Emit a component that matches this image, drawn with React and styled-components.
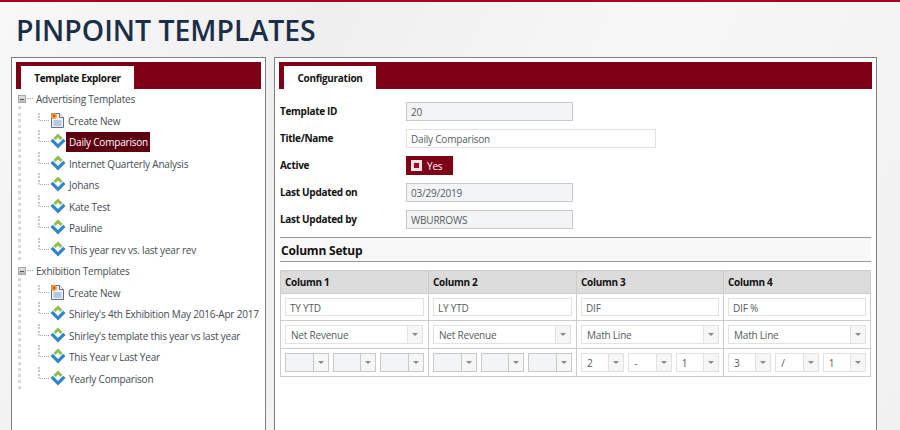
import React from "react";
import styled, { createGlobalStyle } from "styled-components";

const Global = createGlobalStyle`
  html, body { margin: 0; padding: 0; height: 430px; overflow: hidden; }
  body {
    font-family: "Open Sans", "Noto Sans", sans-serif;
    background: linear-gradient(115deg, #f8f8f8 0%, #efefef 30%, #f7f7f7 60%, #f1f1f1 100%);
  }
  * { box-sizing: border-box; }
`;
const uiFont = `font-size: 10px; letter-spacing: -0.2px;`;
const uiBold = `font-size: 10px; font-weight: 700; letter-spacing: -0.3px;`;
const Page = styled.div`
  width: 900px; height: 430px; overflow: hidden;
  border-top: 2px solid #a80026;
  padding: 0 11px;
`;
const Title = styled.h1`
  margin: 0; padding: 0 0 0 5px; height: 55px;
  font-size: 28.4px; line-height: 57px; font-weight: 600; color: #1b2e47;
  white-space: nowrap;
`;
const Panels = styled.div`display: flex; gap: 8px; align-items: flex-start;`;
const Panel = styled.section`
  width: ${p => p.$w}px; height: 400px; flex: none;
  background: #fff; border: 1px solid #7f7f7f;
  padding: 4px 4px 0;
`;
const TabBar = styled.div`
  height: 27px; background: #7e0016; padding: 4px 0 0 5px;
`;
const Tab = styled.div`
  width: ${p => p.$w}px; height: 23px; background: #fff;
  ${uiBold} line-height: 24px; text-align: center; color: #111;
`;
const Tree = styled.div`margin-top: -1px;`;
const RootRow = styled.div`
  height: 21.5px; display: flex; align-items: center; position: relative;
  ${uiFont} color: #444a55; padding-left: 19px; gap: 1px;
`;
const Toggle = styled.span`
  width: 8px; height: 8px; flex: none; margin-left: -17px;
  background: linear-gradient(#e4e4e4, #b8b8b8); border: 1px solid #a8a8a8;
  display: flex; align-items: center; justify-content: center; margin-top: 1px;
  &::after { content: ""; width: 4px; height: 1px; background: #555; }
`;
const RootDash = styled.span`
  width: 6px; height: 0; flex: none; border-top: 1px dotted #aaa; margin-right: 2px;
`;
const Kids = styled.div`
  position: relative; padding-left: 19px;
  &::before {
    content: ""; position: absolute; left: 2px; top: -4px; bottom: 0;
    border-left: 3px dotted #d8d8d8;
  }
`;
const KidRow = styled.div`
  height: 21.5px; display: flex; align-items: center; position: relative;
  ${uiFont} color: #444a55;
`;
const Conn = styled.span`
  position: absolute; left: 3px; top: ${p => p.$first ? 3 : -1}px; width: 11px;
  height: ${p => p.$first ? 8 : 12}px;
  border-left: 2px dotted #c8c8c8; border-bottom: 1px dotted #aaa;
`;
const IconBox = styled.span`
  flex: none; margin-left: 15px; width: 16px; height: 18px; display: flex; margin-top: 1px;
`;
const Label = styled.span`
  padding: 0 2px 0 3px; line-height: 20px; margin-top: 1px; white-space: nowrap;
  ${p => p.$new && "margin-left: -1px;"}
  ${p => p.$sel && "background:#5c0010;color:#fff;"}
`;

const Body = styled.div`padding: 13px 1px 0;`;
const FormRow = styled.div`
  height: 27px; display: flex; ${uiFont}
`;
const FieldLabel = styled.label`
  width: 126px; ${uiBold} color: #111; line-height: 19px; flex: none;
`;
const Field = styled.div`
  width: ${p => p.$w}px; height: 19px; padding: 0 4px;
  border: 1px solid ${p => p.$ro ? "#c8c8c8" : "#e2e2e2"};
  background: ${p => p.$ro ? "#f3f4f6" : "#fff"};
  color: #555b63; line-height: 19px;
`;
const Toggle2 = styled.div`
  width: 47px; height: 19px; background: #7e0016; color: #fff;
  display: flex; align-items: center; padding-left: 5px; gap: 5px;
`;
const Check = styled.span`
  width: 11px; height: 11px; background: #a80026; border: 3px solid #e8e4e4; flex: none;
`;
const SectionHead = styled.div`
  height: 25px; border-top: 1px solid #999; border-bottom: 1px solid #999;
  background: #f8f8f8; font-size: 12px; font-weight: 700; letter-spacing: -0.2px; color: #111; line-height: 25px; padding-left: 1px;
`;
const Table = styled.div`
  margin-top: 8px; width: 591px; border: 1px solid #ccc;
  display: grid; grid-template-columns: 148px 148px 147px 146px;
`;
const Head = styled.div`
  height: 23px; background: #dcdcdc; ${uiBold} color: #111;
  padding-left: 4px; line-height: 23px; border-bottom: 1px solid #ccc;
  border-right: ${p => p.$last ? 0 : "1px solid #ccc"};
`;
const Cell = styled.div`
  height: ${p => p.$h}px; display: flex; gap: 4px; padding: 4px 4px 0;
  border-bottom: ${p => p.$end ? 0 : "1px solid #ccc"};
  border-right: ${p => p.$last ? 0 : "1px solid #ccc"};
`;
const TextInput = styled.div`
  flex: 1; height: 18px; border: 1px solid #e2e2e2; background: #fff;
  ${uiFont} line-height: 18px; padding-left: 4px; color: #555b63;
`;
const Select = styled.div`
  flex: ${p => p.$small ? "1 1 0" : "none"}; ${p => !p.$small && "width: 138px;"}
  min-width: 0; height: 19px; display: flex;
  border: 1px solid ${p => p.$empty ? "#c8c8c8" : "#e2e2e2"};
  background: ${p => p.$empty ? "#f3f4f6" : "#fff"};
`;
const SelectValue = styled.span`
  flex: 1; min-width: 0; ${uiFont} line-height: 18px; padding-left: 5px; color: #555b63;
`;
const Arrow = styled.span`
  flex: none; width: 15px; border-left: 1px solid ${p => p.$empty ? "#c8c8c8" : "#e2e2e2"};
  background: #f6f6f6; display: flex; align-items: center; justify-content: center;
  &::after {
    content: ""; width: 0; height: 0; border: 3.5px solid transparent; border-top: 3.5px solid #8a8a8a; border-bottom: 0;
  }
`;

const Diamond = () => (
  <svg width="16" height="16" viewBox="0 0 16 16">
    <path d="M8 0.5 L12.6 5 L10.4 7 L8 4.6 L5.6 7 L3.4 5 Z" fill="#8fbf4a" />
    <path d="M2.8 5.8 L0.5 8 L8 15.5 L15.5 8 L13.2 5.8 L8 11 Z" fill="#2f86c8" />
  </svg>
);
const NewDoc = () => (
  <svg width="15" height="17" viewBox="0 0 15 17">
    <path d="M1.5 1.5 H9.5 L13.5 5.5 V15.5 H1.5 Z" fill="#eef1f7" stroke="#5a6f9a" />
    <path d="M9.5 1.5 V5.5 H13.5" fill="#fff" stroke="#5a6f9a" />
    <rect x="3.5" y="8" width="8" height="6" fill="#b9c8e2" />
    <circle cx="4" cy="4" r="3" fill="#f7a928" />
    <circle cx="4" cy="4" r="1.4" fill="#e2483a" />
  </svg>
);

const adv = ["Daily Comparison", "Internet Quarterly Analysis", "Johans", "Kate Test", "Pauline", "This year rev vs. last year rev"];
const exh = ["Shirley's 4th Exhibition May 2016-Apr 2017", "Shirley's template this year vs last year", "This Year v Last Year", "Yearly Comparison"];

const Group = ({ name, items, selected }) => (
  <>
    <RootRow><Toggle /><RootDash />{name}</RootRow>
    <Kids>
      <KidRow>
        <Conn $first />
        <IconBox><NewDoc /></IconBox>
        <Label $new>Create New</Label>
      </KidRow>
      {items.map(t => (
        <KidRow key={t}>
          <Conn />
          <IconBox><Diamond /></IconBox>
          <Label $sel={t === selected}>{t}</Label>
        </KidRow>
      ))}
    </Kids>
  </>
);

const cols = [
  { h: "Column 1", t: "TY YTD", s: "Net Revenue", m: ["", "", ""] },
  { h: "Column 2", t: "LY YTD", s: "Net Revenue", m: ["", "", ""] },
  { h: "Column 3", t: "DIF", s: "Math Line", m: ["2", "-", "1"] },
  { h: "Column 4", t: "DIF %", s: "Math Line", m: ["3", "/", "1"] },
];

export default function App() {
  return (
    <Page>
      <Global />
      <Title>PINPOINT TEMPLATES</Title>
      <Panels>
        <Panel $w={255}>
          <TabBar><Tab $w={113}>Template Explorer</Tab></TabBar>
          <Tree>
            <Group name="Advertising Templates" items={adv} selected="Daily Comparison" />
            <Group name="Exhibition Templates" items={exh} />
          </Tree>
        </Panel>
        <Panel $w={603}>
          <TabBar><Tab $w={92}>Configuration</Tab></TabBar>
          <Body>
            <FormRow><FieldLabel>Template ID</FieldLabel><Field $w={167} $ro>20</Field></FormRow>
            <FormRow><FieldLabel>Title/Name</FieldLabel><Field $w={250}>Daily Comparison</Field></FormRow>
            <FormRow><FieldLabel>Active</FieldLabel><Toggle2><Check />Yes</Toggle2></FormRow>
            <FormRow><FieldLabel>Last Updated on</FieldLabel><Field $w={167} $ro>03/29/2019</Field></FormRow>
            <FormRow><FieldLabel>Last Updated by</FieldLabel><Field $w={167} $ro>WBURROWS</Field></FormRow>
            <SectionHead>Column Setup</SectionHead>
            <Table>
              {cols.map((c, i) => <Head key={c.h} $last={i === 3}>{c.h}</Head>)}
              {cols.map((c, i) => <Cell key={c.h} $h={27} $last={i === 3}><TextInput>{c.t}</TextInput></Cell>)}
              {cols.map((c, i) => (
                <Cell key={c.h} $h={28} $last={i === 3}>
                  <Select><SelectValue>{c.s}</SelectValue><Arrow /></Select>
                </Cell>
              ))}
              {cols.map((c, i) => (
                <Cell key={c.h} $h={27} $end $last={i === 3}>
                  {c.m.map((v, j) => (
                    <Select key={j} $small $empty={!v}><SelectValue>{v}</SelectValue><Arrow $empty={!v} /></Select>
                  ))}
                </Cell>
              ))}
            </Table>
          </Body>
        </Panel>
      </Panels>
    </Page>
  );
}
